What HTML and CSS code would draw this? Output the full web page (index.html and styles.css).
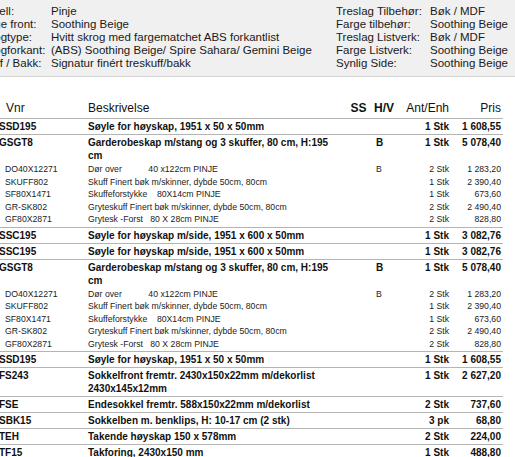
FILE: index.html
```html
<!DOCTYPE html>
<html lang="no">
<head>
    <meta charset="UTF-8">
    <title>Ordre</title>
    <link rel="stylesheet" href="styles.css">
</head>
<body>
    <!-- Modell-info -->
    <div class="info">
        <div class="info-col info-left">
            <span class="lbl">Modell:</span><span>Pinje</span>
            <span class="lbl">Farge front:</span><span>Soothing Beige</span>
            <span class="lbl">Skrogtype:</span><span>Hvitt skrog med fargematchet ABS forkantlist</span>
            <span class="lbl">Skrogforkant:</span><span>(ABS) Soothing Beige/ Spire Sahara/ Gemini Beige</span>
            <span class="lbl">Skuff / Bakk:</span><span>Signatur finért treskuff/bakk</span>
        </div>
        <div class="info-col info-right">
            <span class="lbl">Treslag Tilbehør:</span><span>Bøk / MDF</span>
            <span class="lbl">Farge tilbehør:</span><span>Soothing Beige</span>
            <span class="lbl">Treslag Listverk:</span><span>Bøk / MDF</span>
            <span class="lbl">Farge Listverk:</span><span>Soothing Beige</span>
            <span class="lbl">Synlig Side:</span><span>Soothing Beige</span>
        </div>
    </div>

    <!-- Varelinjer -->
    <table class="lines">
        <colgroup>
            <col class="c-vnr"><col class="c-desc"><col class="c-ss"><col class="c-hv"><col class="c-ant"><col class="c-pris">
        </colgroup>
        <thead>
            <tr>
                <th class="vnr">Vnr</th>
                <th>Beskrivelse</th>
                <th class="ss">SS</th>
                <th class="hv">H/V</th>
                <th class="num">Ant/Enh</th>
                <th class="num pris">Pris</th>
            </tr>
        </thead>
        <tbody>
            <tr class="main"><td>SSD195</td><td class="desc">Søyle for høyskap, 1951 x 50 x 50mm</td><td></td><td></td><td class="num">1 Stk</td><td class="num pris">1 608,55</td></tr>

            <tr class="main"><td>GSGT8</td><td class="desc">Garderobeskap m/stang og 3 skuffer, 80 cm, H:195 cm</td><td></td><td class="hv">B</td><td class="num">1 Stk</td><td class="num pris">5 078,40</td></tr>
            <tr class="sub"><td>DO40X12271</td><td>Dør over           40 x122cm PINJE</td><td></td><td class="hv">B</td><td class="num">2 Stk</td><td class="num pris">1 283,20</td></tr>
            <tr class="sub"><td>SKUFF802</td><td>Skuff Finert bøk m/skinner, dybde 50cm, 80cm</td><td></td><td></td><td class="num">1 Stk</td><td class="num pris">2 390,40</td></tr>
            <tr class="sub"><td>SF80X1471</td><td>Skuffeforstykke    80X14cm PINJE</td><td></td><td></td><td class="num">1 Stk</td><td class="num pris">673,60</td></tr>
            <tr class="sub"><td>GR-SK802</td><td>Gryteskuff Finert bøk m/skinner, dybde 50cm, 80cm</td><td></td><td></td><td class="num">2 Stk</td><td class="num pris">2 490,40</td></tr>
            <tr class="sub last"><td>GF80X2871</td><td>Grytesk -Forst   80 X 28cm PINJE</td><td></td><td></td><td class="num">2 Stk</td><td class="num pris">828,80</td></tr>

            <tr class="main"><td>SSC195</td><td class="desc">Søyle for høyskap m/side, 1951 x 600 x 50mm</td><td></td><td></td><td class="num">1 Stk</td><td class="num pris">3 082,76</td></tr>
            <tr class="main"><td>SSC195</td><td class="desc">Søyle for høyskap m/side, 1951 x 600 x 50mm</td><td></td><td></td><td class="num">1 Stk</td><td class="num pris">3 082,76</td></tr>

            <tr class="main"><td>GSGT8</td><td class="desc">Garderobeskap m/stang og 3 skuffer, 80 cm, H:195 cm</td><td></td><td class="hv">B</td><td class="num">1 Stk</td><td class="num pris">5 078,40</td></tr>
            <tr class="sub"><td>DO40X12271</td><td>Dør over           40 x122cm PINJE</td><td></td><td class="hv">B</td><td class="num">2 Stk</td><td class="num pris">1 283,20</td></tr>
            <tr class="sub"><td>SKUFF802</td><td>Skuff Finert bøk m/skinner, dybde 50cm, 80cm</td><td></td><td></td><td class="num">1 Stk</td><td class="num pris">2 390,40</td></tr>
            <tr class="sub"><td>SF80X1471</td><td>Skuffeforstykke    80X14cm PINJE</td><td></td><td></td><td class="num">1 Stk</td><td class="num pris">673,60</td></tr>
            <tr class="sub"><td>GR-SK802</td><td>Gryteskuff Finert bøk m/skinner, dybde 50cm, 80cm</td><td></td><td></td><td class="num">2 Stk</td><td class="num pris">2 490,40</td></tr>
            <tr class="sub last"><td>GF80X2871</td><td>Grytesk -Forst   80 X 28cm PINJE</td><td></td><td></td><td class="num">2 Stk</td><td class="num pris">828,80</td></tr>

            <tr class="main"><td>SSD195</td><td class="desc">Søyle for høyskap, 1951 x 50 x 50mm</td><td></td><td></td><td class="num">1 Stk</td><td class="num pris">1 608,55</td></tr>
            <tr class="main"><td>FS243</td><td class="desc">Sokkelfront fremtr. 2430x150x22mm m/dekorlist 2430x145x12mm</td><td></td><td></td><td class="num">1 Stk</td><td class="num pris">2 627,20</td></tr>
            <tr class="main"><td>FSE</td><td class="desc">Endesokkel fremtr. 588x150x22mm m/dekorlist</td><td></td><td></td><td class="num">2 Stk</td><td class="num pris">737,60</td></tr>
            <tr class="main"><td>SBK15</td><td class="desc">Sokkelben m. benklips, H: 10-17 cm (2 stk)</td><td></td><td></td><td class="num">3 pk</td><td class="num pris">68,80</td></tr>
            <tr class="main"><td>TEH</td><td class="desc">Takende høyskap 150 x 578mm</td><td></td><td></td><td class="num">2 Stk</td><td class="num pris">224,00</td></tr>
            <tr class="main"><td>TF15</td><td class="desc">Takforing, 2430x150 mm</td><td></td><td></td><td class="num">1 Stk</td><td class="num pris">488,80</td></tr>
        </tbody>
    </table>
</body>
</html>
```

FILE: styles.css
```css
body {
    margin: 0;
    font-family: "Liberation Sans", Arial, sans-serif;
    color: #111;
    background: #fff;
    overflow: hidden;
}

/* Modell-info */
.info {
    display: flex;
    background-color: #f0f0f0;
    border-bottom: 1px solid #d6d6d6;
    padding: 5px 0 6px 0;
    font-size: 11.5px;
    line-height: 13px;
    color: #1a1a1a;
}
.info-col {
    display: grid;
    white-space: nowrap;
}
.info-left {
    grid-template-columns: 74px auto;
    flex: 0 0 359px;
    margin-left: -23px;
}
.info-right {
    grid-template-columns: 94px auto;
}

/* Varelinjer */
.lines {
    border-collapse: collapse;
    table-layout: fixed;
    width: 504px;
    margin: 24px 0 0 -1px;
}
.c-vnr { width: 89px; }
.c-desc { width: 257px; }
.c-ss { width: 27px; }
.c-hv { width: 26px; }
.c-ant { width: 52px; }
.c-pris { width: 53px; }

.lines th {
    font-size: 12px;
    font-weight: normal;
    text-align: left;
    line-height: 15px;
    padding: 0 0 2px 0;
    border-bottom: 1px solid #b4b4b4;
    color: #111;
}
.lines th.vnr { padding-left: 7px; }
.lines th.ss { text-align: center; font-weight: bold; }
.lines th.hv { padding-left: 2px; font-weight: bold; }

.lines td {
    padding: 0;
    vertical-align: top;
}
.main td {
    font-size: 10px;
    font-weight: bold;
    line-height: 13px;
    padding: 1px 0;
    border-top: 1px solid #b4b4b4;
}
.main td.desc { padding-right: 8px; }
.lines tbody tr.main:first-child td {
    border-top: none;
}
.sub td {
    font-size: 8.7px;
    line-height: 12.5px;
    color: #222;
    white-space: pre;
}
.sub td:first-child { padding-left: 6px; }
.sub.last td { padding-bottom: 1px; }

.lines td.hv { padding-left: 4px; }
.lines .num {
    text-align: right;
    padding-right: 1px;
    white-space: nowrap;
}
.lines .pris { padding-right: 2px; }
```
